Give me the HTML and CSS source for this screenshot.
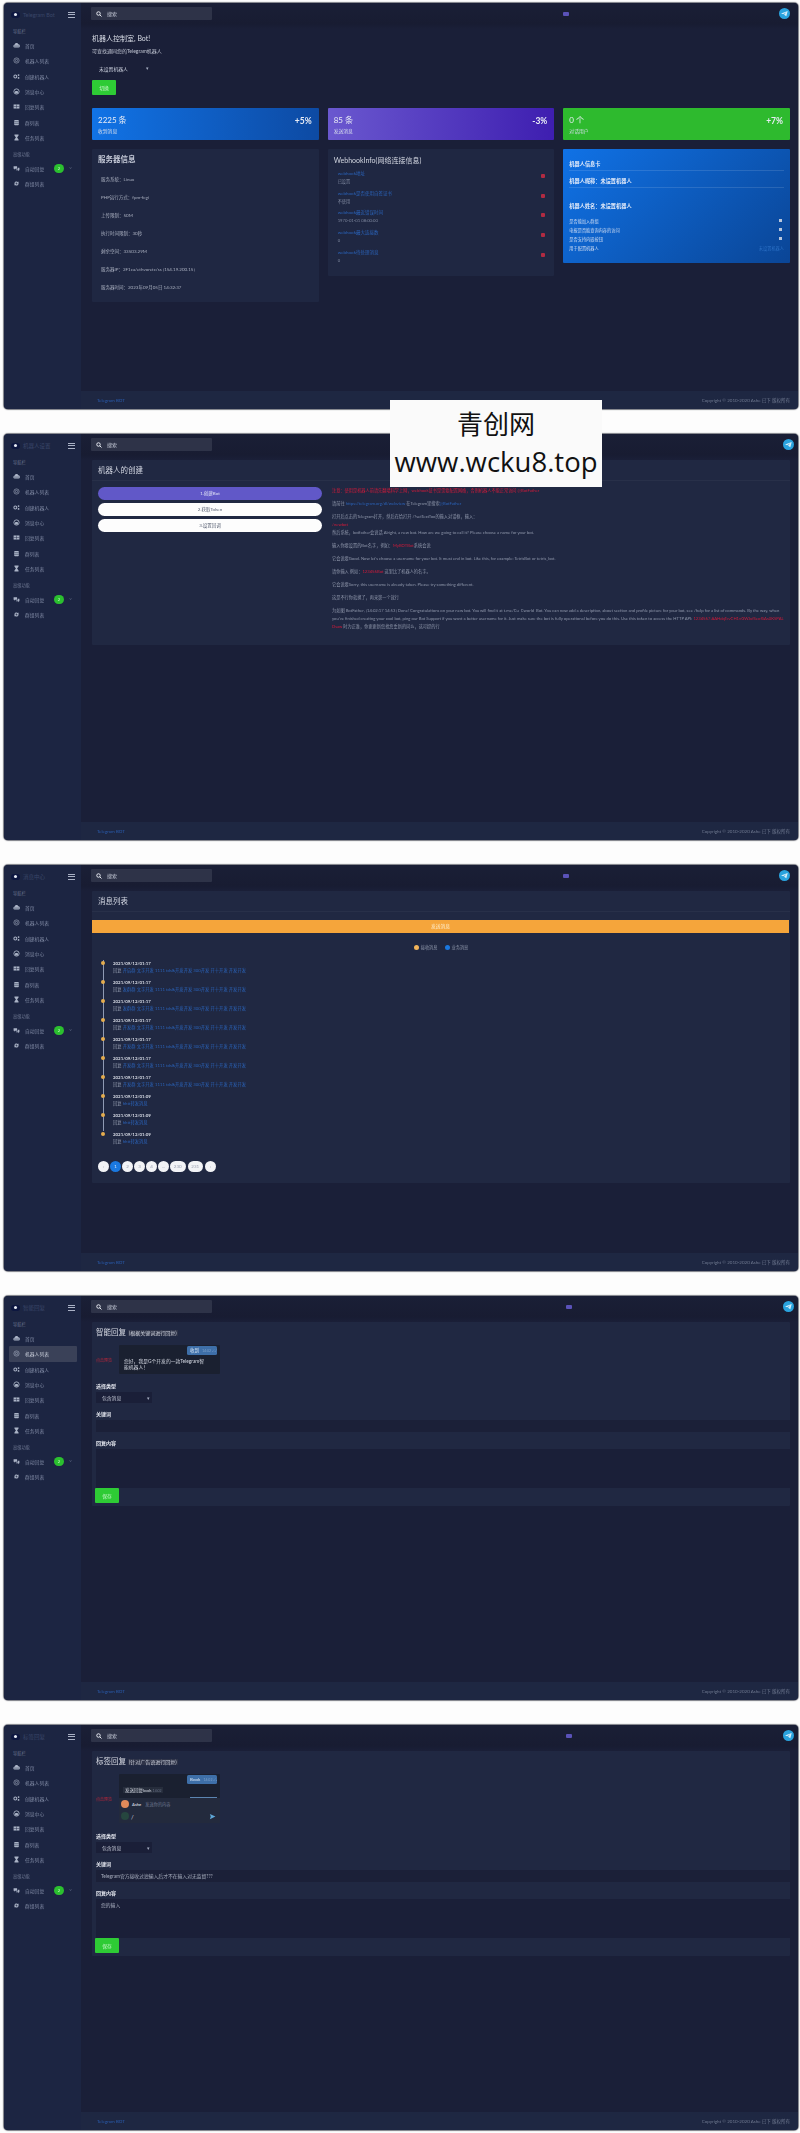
FILE: index.html
```html
<!DOCTYPE html>
<html lang="zh-CN">
<head>
<meta charset="utf-8">
<title>Telegram Bot</title>
<link rel="stylesheet" href="styles.css">
</head>
<body>
<svg class="defs" xmlns="http://www.w3.org/2000/svg">
  <symbol id="i-home" viewBox="0 0 24 24"><path d="M6 19a5 5 0 0 1-1-9.9A7 7 0 0 1 18.500 8 5.500 5.500 0 0 1 18 19z" fill="currentColor"/><path d="M3 14h18" stroke="#1c2542" stroke-width="1.500"/></symbol>
  <symbol id="i-globe" viewBox="0 0 24 24"><circle cx="12" cy="12" r="9" fill="none" stroke="currentColor" stroke-width="2"/><circle cx="12" cy="12" r="4" fill="none" stroke="currentColor" stroke-width="2"/></symbol>
  <symbol id="i-gears" viewBox="0 0 24 24"><circle cx="8" cy="12" r="5" fill="none" stroke="currentColor" stroke-width="3.500"/><circle cx="19" cy="7" r="3" fill="currentColor"/><circle cx="19" cy="17" r="3" fill="currentColor"/></symbol>
  <symbol id="i-head" viewBox="0 0 24 24"><circle cx="12" cy="12" r="9" fill="none" stroke="currentColor" stroke-width="3"/><rect x="7" y="10" width="10" height="9" rx="2" fill="currentColor"/></symbol>
  <symbol id="i-table" viewBox="0 0 24 24"><path d="M2 5h20v14H2z" fill="currentColor"/><path d="M12 5v14M2 12h20" stroke="#1c2542" stroke-width="1.500"/></symbol>
  <symbol id="i-stack" viewBox="0 0 24 24"><rect x="4" y="3" width="16" height="18" rx="3" fill="currentColor"/><path d="M4 9h16M4 15h16" stroke="#1c2542" stroke-width="1.500"/></symbol>
  <symbol id="i-glass" viewBox="0 0 24 24"><path d="M5 2h14v3l-5 7 5 7v3H5v-3l5-7-5-7z" fill="currentColor"/></symbol>
  <symbol id="i-chat" viewBox="0 0 24 24"><path d="M2 4h12v9H7l-3 3v-3H2z" fill="currentColor"/><path d="M16 9h6v9h-2v3l-3-3h-7v-3h6z" fill="currentColor"/></symbol>
  <symbol id="i-loop" viewBox="0 0 24 24"><path d="M5 12a7 7 0 0 1 12-5l2-2v7h-7l2-2a4 4 0 0 0-6 2zM19 12a7 7 0 0 1-12 5l-2 2v-7h7l-2 2a4 4 0 0 0 6-2z" fill="currentColor"/></symbol>
  <symbol id="i-search" viewBox="0 0 24 24"><circle cx="10" cy="10" r="7" fill="none" stroke="currentColor" stroke-width="4"/><path d="M15 15l7 7" stroke="currentColor" stroke-width="4"/></symbol>
  <symbol id="i-tg" viewBox="0 0 24 24"><circle cx="12" cy="12" r="12" fill="#2aa3de"/><path d="M19 6.500 4.500 12l4.500 1.500L16 9l-5 5.500 5 3.500z" fill="#d8eefa"/></symbol>
  <symbol id="i-send" viewBox="0 0 24 24"><path d="M3 3l19 9-19 9 3-9z" fill="currentColor"/></symbol>
</svg>

<section class="window">
  <aside class="sidebar">
    <div class="brand"><span class="logo"><span class="logo-dot"></span></span><span class="brand-name">Telegram Bot</span><span class="burger"><i></i><i></i><i></i></span></div>
    <div class="nav-section">导航栏</div>
    <a class="nav-item"><svg class="nav-icon"><use href="#i-home"/></svg>首页</a>
    <a class="nav-item"><svg class="nav-icon"><use href="#i-globe"/></svg>机器人列表</a>
    <a class="nav-item"><svg class="nav-icon"><use href="#i-gears"/></svg>创建机器人</a>
    <a class="nav-item"><svg class="nav-icon"><use href="#i-head"/></svg>消息中心</a>
    <a class="nav-item"><svg class="nav-icon"><use href="#i-table"/></svg>回复列表</a>
    <a class="nav-item"><svg class="nav-icon"><use href="#i-stack"/></svg>群列表</a>
    <a class="nav-item"><svg class="nav-icon"><use href="#i-glass"/></svg>任务列表</a>
    <div class="nav-section second">高级功能</div>
    <a class="nav-item"><svg class="nav-icon"><use href="#i-chat"/></svg>自动回复<span class="nav-badge">2</span><span class="nav-chev">›</span></a>
    <a class="nav-item"><svg class="nav-icon"><use href="#i-loop"/></svg>群组列表</a>
  </aside>
  <div class="main">
    <header class="topbar">
      <div class="search"><svg class="search-icon"><use href="#i-search"/></svg>搜索</div>
      <span class="pill"></span>
      <svg class="tg"><use href="#i-tg"/></svg>
    </header>
    <div class="content">
      <h1 class="hero-title">机器人控制室, Bot!</h1>
      <p class="hero-sub">可查找通同您的Telegram机器人</p>
      <div class="hero-select">未设置机器人<span class="caret">▾</span></div>
      <a class="btn hero-btn">切换</a>
      <div class="stats">
        <div class="stat stat-blue"><div><div class="stat-num">2225 条</div><div class="stat-label">收到消息</div></div><div class="stat-pct">+5%</div></div>
        <div class="stat stat-purple"><div><div class="stat-num">85 条</div><div class="stat-label">发送消息</div></div><div class="stat-pct">-3%</div></div>
        <div class="stat stat-green"><div><div class="stat-num">0 个</div><div class="stat-label">对话用户</div></div><div class="stat-pct">+7%</div></div>
      </div>
      <div class="cards">
        <div class="card server">
          <h2 class="server-title">服务器信息</h2>
          <p class="server-row">服务系统：Linux</p>
          <p class="server-row">PHP运行方式：fpm-fcgi</p>
          <p class="server-row">上传限制：50M</p>
          <p class="server-row">执行时间限制：30秒</p>
          <p class="server-row">剩余空间：33503.29M</p>
          <p class="server-row">服务器IP：2F1ca/ethvoretc/ss [154.19.200.15]</p>
          <p class="server-row">服务器时间：2023年09月05日 14:32:37</p>
        </div>
        <div class="card hook">
          <h2 class="hook-title">WebhookInfo(网络连接信息)</h2>
          <div class="hook-row"><div><a class="hook-link">webhook地址</a><div class="hook-val">已设置</div></div><span class="hook-x"></span></div>
          <div class="hook-row"><div><a class="hook-link">webhook是否使用自签证书</a><div class="hook-val">不使用</div></div><span class="hook-x"></span></div>
          <div class="hook-row"><div><a class="hook-link">webhook最近错误时间</a><div class="hook-val">1970-01-01 08:00:00</div></div><span class="hook-x"></span></div>
          <div class="hook-row"><div><a class="hook-link">webhook最大连接数</a><div class="hook-val">0</div></div><span class="hook-x"></span></div>
          <div class="hook-row"><div><a class="hook-link">webhook待处理消息</a><div class="hook-val">0</div></div><span class="hook-x"></span></div>
        </div>
        <div class="card info">
          <div class="info-head">机器人信息卡</div>
          <div class="info-head ruled">机器人昵称：未设置机器人</div>
          <div class="info-head spaced">机器人姓名：未设置机器人</div>
          <div class="info-row">是否能加入群组<span class="info-check"></span></div>
          <div class="info-row">电报是否能查询内容的访问<span class="info-check"></span></div>
          <div class="info-row">是否支持内嵌按钮<span class="info-check"></span></div>
          <div class="info-row">用于配置机器人<span class="info-dim">未设置机器人</span></div>
        </div>
      </div>
    </div>
    <footer class="footer"><a class="foot-link">Telegram BOT</a><span class="foot-copy">Copyright © 2010-2020 Ashe 已下 版权所有</span></footer>
  </div>
</section>

<section class="window">
  <aside class="sidebar">
    <div class="brand"><span class="logo"><span class="logo-dot"></span></span><span class="brand-name">机器人设置</span><span class="burger"><i></i><i></i><i></i></span></div>
    <div class="nav-section">导航栏</div>
    <a class="nav-item"><svg class="nav-icon"><use href="#i-home"/></svg>首页</a>
    <a class="nav-item"><svg class="nav-icon"><use href="#i-globe"/></svg>机器人列表</a>
    <a class="nav-item"><svg class="nav-icon"><use href="#i-gears"/></svg>创建机器人</a>
    <a class="nav-item"><svg class="nav-icon"><use href="#i-head"/></svg>消息中心</a>
    <a class="nav-item"><svg class="nav-icon"><use href="#i-table"/></svg>回复列表</a>
    <a class="nav-item"><svg class="nav-icon"><use href="#i-stack"/></svg>群列表</a>
    <a class="nav-item"><svg class="nav-icon"><use href="#i-glass"/></svg>任务列表</a>
    <div class="nav-section second">高级功能</div>
    <a class="nav-item"><svg class="nav-icon"><use href="#i-chat"/></svg>自动回复<span class="nav-badge">2</span><span class="nav-chev">›</span></a>
    <a class="nav-item"><svg class="nav-icon"><use href="#i-loop"/></svg>群组列表</a>
  </aside>
  <div class="main">
    <header class="topbar">
      <div class="search"><svg class="search-icon"><use href="#i-search"/></svg>搜索</div>
      <span class="pill pill-wide"></span>
      <svg class="tg tg-wide"><use href="#i-tg"/></svg>
    </header>
    <div class="content">
      <div class="panel create">
        <h2 class="panel-title">机器人的创建</h2>
        <div class="create-body">
          <div class="steps">
            <a class="step step-on">1.创建Bot</a>
            <a class="step">2.获取Token</a>
            <a class="step">3.设置回调</a>
          </div>
          <div class="guide">
            <p class="red">注意：使用是机器人前请先翻墙科学上网，webhook证书是需要配置网络，否则机器人不能正常访问 @BotFather</p>
            <p>请前往 <a class="link">https://telegram.org/dl/webview</a> 在Telegram里搜索<a class="link">@BotFather</a></p>
            <p>打开后点击的Telegram打开，然后在给打开 /?setTextToo的输入对话框，输入：<br><span class="red">/newbot</span><br>然后系统，botfather会说话 Alright, a new bot. How are we going to call it? Please choose a name for your bot.</p>
            <p>输入你要设置的Bot名字，例如：<span class="red">MyBOTBot</span>系统会说</p>
            <p>它会说要Good. Now let's choose a username for your bot. It must end in bot. Like this, for example: TetrisBot or tetris_bot.</p>
            <p>请你输入 例如：<span class="red">123456Bot</span> 这里比了机器人的名字。</p>
            <p>它会说要Sorry, this username is already taken. Please try something different.</p>
            <p>这是不行你就换了，再来第一个就行</p>
            <p>为如图 BotFather, [14:02:17 14:53] Done! Congratulations on your new bot. You will find it at t.me/Cu_Cworld_Bot. You can now add a description, about section and profile picture for your bot, see /help for a list of commands. By the way, when you've finished creating your cool bot, ping our Bot Support if you want a better username for it. Just make sure the bot is fully operational before you do this. Use this token to access the HTTP API: <span class="red token">1234567:AAHdqTcvCH1vGWJxfSeofSAs0K5PALDsaw</span> 时为正准，你更更新您找您重新的问么，这可提的行</p>
          </div>
        </div>
      </div>
    </div>
    <footer class="footer"><a class="foot-link">Telegram BOT</a><span class="foot-copy">Copyright © 2010-2020 Ashe 已下 版权所有</span></footer>
  </div>
</section>

<section class="window">
  <aside class="sidebar">
    <div class="brand"><span class="logo"><span class="logo-dot"></span></span><span class="brand-name">消息中心</span><span class="burger"><i></i><i></i><i></i></span></div>
    <div class="nav-section">导航栏</div>
    <a class="nav-item"><svg class="nav-icon"><use href="#i-home"/></svg>首页</a>
    <a class="nav-item"><svg class="nav-icon"><use href="#i-globe"/></svg>机器人列表</a>
    <a class="nav-item"><svg class="nav-icon"><use href="#i-gears"/></svg>创建机器人</a>
    <a class="nav-item"><svg class="nav-icon"><use href="#i-head"/></svg>消息中心</a>
    <a class="nav-item"><svg class="nav-icon"><use href="#i-table"/></svg>回复列表</a>
    <a class="nav-item"><svg class="nav-icon"><use href="#i-stack"/></svg>群列表</a>
    <a class="nav-item"><svg class="nav-icon"><use href="#i-glass"/></svg>任务列表</a>
    <div class="nav-section second">高级功能</div>
    <a class="nav-item"><svg class="nav-icon"><use href="#i-chat"/></svg>自动回复<span class="nav-badge">2</span><span class="nav-chev">›</span></a>
    <a class="nav-item"><svg class="nav-icon"><use href="#i-loop"/></svg>群组列表</a>
  </aside>
  <div class="main">
    <header class="topbar">
      <div class="search"><svg class="search-icon"><use href="#i-search"/></svg>搜索</div>
      <span class="pill"></span>
      <svg class="tg"><use href="#i-tg"/></svg>
    </header>
    <div class="content">
      <div class="panel messages">
        <h2 class="panel-title">消息列表</h2>
        <div class="banner">发送消息</div>
        <div class="legend"><span class="dot dot-orange"></span>接收消息<span class="dot dot-blue"></span>业务消息</div>
        <ul class="timeline">
          <li class="tl-item"><div class="tl-date">2021/09/12/01:17</div><div class="tl-text">回复 <a class="link">开启群 文字开发 1111 tdslk开发开发 300开发 开十开发 开发开发</a></div></li>
          <li class="tl-item"><div class="tl-date">2021/09/12/01:17</div><div class="tl-text">回复 <a class="link">发群群 文字开发 1111 tdslk开发开发 300开发 开十开发 开发开发</a></div></li>
          <li class="tl-item"><div class="tl-date">2021/09/12/01:17</div><div class="tl-text">回复 <a class="link">发群群 文字开发 1111 tdslk开发开发 300开发 开十开发 开发开发</a></div></li>
          <li class="tl-item"><div class="tl-date">2021/09/12/01:17</div><div class="tl-text">回复 <a class="link">开发群 文字开发 1111 tdslk开发开发 300开发 开十开发 开发开发</a></div></li>
          <li class="tl-item"><div class="tl-date">2021/09/12/01:17</div><div class="tl-text">回复 <a class="link">开发群 文字开发 1111 tdslk开发开发 300开发 开十开发 开发开发</a></div></li>
          <li class="tl-item"><div class="tl-date">2021/09/12/01:17</div><div class="tl-text">回复 <a class="link">开发群 文字开发 1111 tdslk开发开发 300开发 开十开发 开发开发</a></div></li>
          <li class="tl-item"><div class="tl-date">2021/09/12/01:17</div><div class="tl-text">回复 <a class="link">开发群 文字开发 1111 tdslk开发开发 300开发 开十开发 开发开发</a></div></li>
          <li class="tl-item"><div class="tl-date">2021/09/12/01:09</div><div class="tl-text">回复 <a class="link">hhtt转发消息</a></div></li>
          <li class="tl-item"><div class="tl-date">2021/09/12/01:09</div><div class="tl-text">回复 <a class="link">hhtt转发消息</a></div></li>
          <li class="tl-item"><div class="tl-date">2021/09/12/01:09</div><div class="tl-text">回复 <a class="link">hhtt转发消息</a></div></li>
        </ul>
        <nav class="pager">
          <a class="page">‹</a><a class="page page-on">1</a><a class="page">2</a><a class="page">3</a><a class="page">4</a><a class="page">…</a><a class="page page-long">230</a><a class="page page-long">231</a><a class="page">›</a>
        </nav>
      </div>
    </div>
    <footer class="footer"><a class="foot-link">Telegram BOT</a><span class="foot-copy">Copyright © 2010-2020 Ashe 已下 版权所有</span></footer>
  </div>
</section>

<section class="window">
  <aside class="sidebar">
    <div class="brand"><span class="logo"><span class="logo-dot"></span></span><span class="brand-name">智能回复</span><span class="burger"><i></i><i></i><i></i></span></div>
    <div class="nav-section">导航栏</div>
    <a class="nav-item"><svg class="nav-icon"><use href="#i-home"/></svg>首页</a>
    <a class="nav-item nav-active"><svg class="nav-icon"><use href="#i-globe"/></svg>机器人列表</a>
    <a class="nav-item"><svg class="nav-icon"><use href="#i-gears"/></svg>创建机器人</a>
    <a class="nav-item"><svg class="nav-icon"><use href="#i-head"/></svg>消息中心</a>
    <a class="nav-item"><svg class="nav-icon"><use href="#i-table"/></svg>回复列表</a>
    <a class="nav-item"><svg class="nav-icon"><use href="#i-stack"/></svg>群列表</a>
    <a class="nav-item"><svg class="nav-icon"><use href="#i-glass"/></svg>任务列表</a>
    <div class="nav-section second">高级功能</div>
    <a class="nav-item"><svg class="nav-icon"><use href="#i-chat"/></svg>自动回复<span class="nav-badge">2</span><span class="nav-chev">›</span></a>
    <a class="nav-item"><svg class="nav-icon"><use href="#i-loop"/></svg>群组列表</a>
  </aside>
  <div class="main">
    <header class="topbar">
      <div class="search"><svg class="search-icon"><use href="#i-search"/></svg>搜索</div>
      <span class="pill pill-wide"></span>
      <svg class="tg tg-wide"><use href="#i-tg"/></svg>
    </header>
    <div class="content">
      <div class="panel reply">
        <h2 class="reply-title">智能回复 <small class="reply-sub">(根据关键词进行回复)</small></h2>
        <div class="preview-row">
          <span class="preview-mark">点击预览</span>
          <div class="shot">
            <div class="shot-top"><span class="shot-btn">收到 <em>14:02 ✓✓</em></span></div>
            <div class="shot-msg">您好，我是G个开发的一款Telegram智能机器人！</div>
          </div>
        </div>
        <label class="field-label">选择类型</label>
        <div class="select-box">包含消息<span class="caret">▾</span></div>
        <label class="field-label">关键词</label>
        <div class="input-box"></div>
        <label class="field-label">回复内容</label>
        <div class="text-box"></div>
        <a class="btn save-btn">保存</a>
      </div>
    </div>
    <footer class="footer"><a class="foot-link">Telegram BOT</a><span class="foot-copy">Copyright © 2010-2020 Ashe 已下 版权所有</span></footer>
  </div>
</section>

<section class="window">
  <aside class="sidebar">
    <div class="brand"><span class="logo"><span class="logo-dot"></span></span><span class="brand-name">标签回复</span><span class="burger"><i></i><i></i><i></i></span></div>
    <div class="nav-section">导航栏</div>
    <a class="nav-item"><svg class="nav-icon"><use href="#i-home"/></svg>首页</a>
    <a class="nav-item"><svg class="nav-icon"><use href="#i-globe"/></svg>机器人列表</a>
    <a class="nav-item"><svg class="nav-icon"><use href="#i-gears"/></svg>创建机器人</a>
    <a class="nav-item"><svg class="nav-icon"><use href="#i-head"/></svg>消息中心</a>
    <a class="nav-item"><svg class="nav-icon"><use href="#i-table"/></svg>回复列表</a>
    <a class="nav-item"><svg class="nav-icon"><use href="#i-stack"/></svg>群列表</a>
    <a class="nav-item"><svg class="nav-icon"><use href="#i-glass"/></svg>任务列表</a>
    <div class="nav-section second">高级功能</div>
    <a class="nav-item"><svg class="nav-icon"><use href="#i-chat"/></svg>自动回复<span class="nav-badge">2</span><span class="nav-chev">›</span></a>
    <a class="nav-item"><svg class="nav-icon"><use href="#i-loop"/></svg>群组列表</a>
  </aside>
  <div class="main">
    <header class="topbar">
      <div class="search"><svg class="search-icon"><use href="#i-search"/></svg>搜索</div>
      <span class="pill pill-wide"></span>
      <svg class="tg tg-wide"><use href="#i-tg"/></svg>
    </header>
    <div class="content">
      <div class="panel reply">
        <h2 class="reply-title">标签回复 <small class="reply-sub">(针对广告语进行回复)</small></h2>
        <div class="preview-row">
          <span class="preview-mark">点击预览</span>
          <div class="shot shot-tall">
            <div class="shot-top"><span class="shot-btn">Book <em>14:02 ✓✓</em></span></div>
            <div class="shot-bubble">发送回复look <em>14:02</em></div>
            <div class="shot-bar"></div>
            <div class="shot-foot">
              <div class="shot-user"><span class="shot-avatar"></span><b>Ashe</b><em>发送你的内容</em></div>
              <div class="shot-input"><span class="shot-ava2"></span><span class="shot-slash">/</span><svg class="shot-send"><use href="#i-send"/></svg></div>
            </div>
          </div>
        </div>
        <label class="field-label">选择类型</label>
        <div class="select-box">包含消息<span class="caret">▾</span></div>
        <label class="field-label">关键词</label>
        <div class="input-box">Telegram官方接收过滤输入后才不在输入对无监督???</div>
        <label class="field-label">回复内容</label>
        <div class="text-box">您的输入</div>
        <a class="btn save-btn">保存</a>
      </div>
    </div>
    <footer class="footer"><a class="foot-link">Telegram BOT</a><span class="foot-copy">Copyright © 2010-2020 Ashe 已下 版权所有</span></footer>
  </div>
</section>

<aside class="watermark"><div class="wm-cn">青创网</div><div class="wm-url">www.wcku8.top</div></aside>
</body>
</html>
```

FILE: styles.css
```css
* { box-sizing: border-box; }
html, body { margin: 0; padding: 0; }
body {
  position: relative;
  width: 800px;
  height: 2133px;
  background: #fdfdfd;
  padding: 3px 2px 0 4px;
  display: grid;
  grid-template-rows: 406px 406px 406px 404px 405px;
  row-gap: 25px;
  font-family: "Lato", "Noto Sans CJK SC", sans-serif;
  color: #c9cedb;
  overflow: hidden;
}
.defs { display: none; }
h1, h2, p, ul { margin: 0; padding: 0; }
ul { list-style: none; }
em { font-style: normal; }

.window {
  display: grid;
  grid-template-columns: 77px 1fr;
  border-radius: 4px;
  overflow: hidden;
  background: #1a1f38;
  box-shadow: 0 0 1px 1px rgba(15, 18, 32, .55);
  filter: blur(.35px);
}

/* sidebar */
.sidebar { background: #1c2542; display: flex; flex-direction: column; }
.brand { height: 23px; display: flex; align-items: center; padding: 0 4px 0 7px; flex: none; }
.logo { width: 9px; height: 6px; border-radius: 3px; background: #0d1740; display: flex; align-items: center; justify-content: center; flex: none; }
.logo-dot { width: 3px; height: 3px; border-radius: 50%; background: #e8ecf5; }
.brand-name { margin-left: 3px; font-size: 5.500px; color: #3a4668; flex: 1; white-space: nowrap; }
.burger { width: 7px; display: flex; flex-direction: column; gap: 1.500px; flex: none; margin-right: 2px; }
.burger i { display: block; height: 1px; background: #aab2c6; }
.nav-section { height: 12px; line-height: 12px; padding-left: 9px; font-size: 4.200px; color: #6c7690; flex: none; }
.nav-section.second { margin-top: 3.300px; }
.nav-item {
  height: 15.330px;
  display: flex;
  align-items: center;
  margin: 0 4px 0 5px;
  padding-left: 4px;
  border-radius: 1px;
  font-size: 4.800px;
  color: #7f89a3;
  white-space: nowrap;
  flex: none;
}
.nav-active { background: #3a4158; color: #c4c9d6; }
.nav-icon { width: 7px; height: 7px; color: #aab3c6; margin-right: 5px; flex: none; }
.nav-badge {
  width: 9.500px;
  height: 9.500px;
  margin-left: auto;
  border-radius: 50%;
  background: #2bc02f;
  color: #d8f5d8;
  font-size: 4px;
  line-height: 9.500px;
  text-align: center;
  flex: none;
}
.nav-chev { margin: 0 6px 0 6px; font-size: 5px; color: #7f89a3; transform: rotate(90deg); }

/* top bar */
.main { display: flex; flex-direction: column; min-width: 0; }
.topbar { height: 26px; flex: none; display: flex; align-items: flex-start; padding: 4px 8px 0 10px; background: linear-gradient(#1a1f36, #181c32 80%, #1a1f38); }
.search { width: 121px; height: 13px; display: flex; align-items: center; padding-left: 5px; background: #2e3348; border-radius: 1px; font-size: 5px; color: #c9cedb; }
.search-icon { width: 6px; height: 6px; margin-right: 5px; color: #e3e6ee; }
.pill { width: 6.500px; height: 4px; margin: 4.500px 210px 0 auto; border-radius: 1px; background: #5a52b8; flex: none; }
.tg { width: 11px; height: 11px; margin-top: 1px; flex: none; }
.pill-wide { margin-right: 210px; transform: translateX(3px); }
.tg-wide { transform: translateX(4px); }

.content { flex: 1; min-height: 0; padding: 0 8px 0 11px; }

.footer { height: 18px; flex: none; display: flex; align-items: center; justify-content: space-between; padding: 0 8px 0 16px; background: #1e2742; font-size: 4.500px; }
.foot-link { color: #2a5db0; }
.foot-copy { color: #6f7990; }

/* dashboard */
.hero-title { padding-top: 4px; height: 14px; line-height: 10px; font-size: 7px; font-weight: 400; color: #d7dbe5; }
.hero-sub { margin-top: 4px; height: 8px; line-height: 8px; font-size: 5px; color: #c0c5d2; }
.hero-select { margin-top: 7px; width: 64px; height: 12px; padding-left: 7px; display: flex; align-items: center; justify-content: space-between; padding-right: 7px; font-size: 4.800px; color: #c9cedb; }
.caret { font-size: 5px; color: #a5adbf; }
.btn { display: flex; align-items: center; justify-content: center; width: 24px; height: 15px; background: #2ecb35; color: #c8f5ca; font-size: 4.800px; border-radius: 1px; }
.hero-btn { margin-top: 6px; }

.stats { margin-top: 13px; display: grid; grid-template-columns: repeat(3, 1fr); column-gap: 9px; }
.stat { height: 32px; padding: 7px 7px 0 6px; display: flex; justify-content: space-between; border-radius: 1px; color: #e8ecf5; }
.stat-blue { background: linear-gradient(90deg, #1173e6, #0d4aa3); }
.stat-purple { background: linear-gradient(90deg, #6a58cf, #3e1eb0); }
.stat-green { background: #2eba2e; }
.stat-num { font-size: 8px; line-height: 10px; }
.stat-label { margin-top: 3px; font-size: 4.800px; line-height: 7px; color: #d6dded; }
.stat-pct { font-size: 8.500px; font-weight: 700; line-height: 11px; margin-top: 1px; }

.cards { margin-top: 9px; display: grid; grid-template-columns: repeat(3, 1fr); column-gap: 9px; align-items: start; }
.card { background: #1f2742; border-radius: 1px; }
.server { height: 153px; padding: 6px 6px 0; }
.server-title { font-size: 7.500px; line-height: 9px; font-weight: 700; color: #c3c8d6; margin-bottom: 7px; }
.server-row { height: 18px; line-height: 18px; padding-left: 3px; font-size: 4.500px; color: #a9afbf; }
.hook { height: 127px; padding: 6px 9px 0 6px; }
.hook-title { font-size: 7px; line-height: 10px; font-weight: 400; color: #d2d6e0; margin-bottom: 3px; }
.hook-row { height: 19.700px; padding: 0 0 0 4px; display: flex; justify-content: space-between; align-items: center; }
.hook-link { display: block; font-size: 4.500px; line-height: 8px; color: #2a62b8; }
.hook-val { font-size: 4.200px; line-height: 8px; color: #7f889f; }
.hook-x { width: 4px; height: 4px; background: #b02b42; border-radius: 1px; margin-top: -4px; }
.info { height: 114px; padding: 11px 6px 0; background: linear-gradient(135deg, #1072e6, #0a4596); color: #e8eefa; }
.info-head { font-size: 5.200px; font-weight: 700; line-height: 8px; padding-bottom: 2px; border-bottom: 1px solid rgba(255, 255, 255, .12); margin-bottom: 6px; }
.info-head.spaced { border-bottom: 0; margin-top: 14px; margin-bottom: 4px; }
.info-row { height: 9px; display: flex; justify-content: space-between; align-items: center; font-size: 4.200px; color: #cfdcf2; }
.info-check { width: 3.500px; height: 3.500px; background: #b8c6dc; margin-right: 2px; }
.info-dim { color: #2a6fc4; }

/* panels */
.panel { background: #202842; border-radius: 1px; }
.panel-title { height: 21px; line-height: 22px; padding-left: 6px; font-size: 7.500px; font-weight: 400; color: #d3d7e2; border-bottom: 1px solid rgba(255, 255, 255, .04); }

/* create */
.create { height: 185px; }
.create-body { display: grid; grid-template-columns: 224px 1fr; column-gap: 10px; padding: 6px 5px 0 6px; }
.steps { display: flex; flex-direction: column; gap: 3px; }
.step { height: 13px; line-height: 13px; border-radius: 7px; background: #fdfdfd; color: #555d70; font-size: 4.500px; text-align: center; }
.step-on { background: #6158c8; color: #dfe1f5; }
.guide p { font-size: 4.200px; line-height: 8px; margin-bottom: 5px; color: #8f97ab; }
.guide .red { color: #d11a3a; }
.guide .token { word-break: break-all; }
.link { color: #2a62b8; }

/* messages */
.messages { height: 292px; }
.banner { margin: 8px 1px 0 0; height: 13px; line-height: 13px; background: #f5a53b; color: #fdebc8; font-size: 4.800px; text-align: center; }
.legend { margin-top: 8px; height: 12px; display: flex; align-items: center; justify-content: center; gap: 2px; font-size: 4.200px; color: #8f97ab; }
.dot { width: 5px; height: 5px; border-radius: 50%; }
.dot-orange { background: #f2b45a; }
.dot-blue { background: #1a78e0; margin-left: 5px; }
.timeline { margin: 0 0 0 8px; padding-top: 7px; }
.tl-item { position: relative; height: 19px; padding-left: 9px; border-left: 1px solid #8f9ab3; margin-left: 3px; }
.tl-item:last-child { border-left-color: transparent; }
.tl-item::before { content: ""; position: absolute; left: -3px; top: 1px; width: 4px; height: 4px; border-radius: 50%; background: #e5ad4e; }
.tl-date { font-size: 4.400px; line-height: 7px; color: #d5d9e3; font-weight: 700; }
.tl-text { font-size: 4.300px; line-height: 7.500px; color: #8f97ab; white-space: nowrap; }
.pager { margin: 10.500px 0 0 6px; display: flex; gap: 0; align-items: center; }
.page { width: 11px; height: 11px; line-height: 11px; margin-right: 1px; border-radius: 6px; background: #f2f3f6; color: #9aa1b2; font-size: 4.500px; text-align: center; }
.page-long { width: 15.500px; margin-right: 2px; }
.page-on { background: #1a78e0; color: #d6e6fb; }

/* forms */
.reply { padding: 6px 0 3px 4px; }
.reply-title { height: 10px; line-height: 10px; font-size: 7.500px; font-weight: 400; color: #d8dbe4; white-space: nowrap; }
.reply-sub { font-size: 5px; color: #d0d4df; background: #2e3348; padding: 0 1px; }
.preview-row { margin-top: 7px; display: flex; align-items: center; }
.preview-mark { width: 23px; flex: none; font-size: 4px; color: #c0263a; }
.shot { width: 101px; height: 29px; background: #1a2030; border-radius: 1px; }
.shot-top { height: 11px; padding: 1px 3px 0 0; display: flex; justify-content: flex-end; }
.shot-btn { width: 30px; height: 9px; padding-left: 3px; line-height: 9px; background: #3e6fa8; border-radius: 1.500px; font-size: 4.500px; color: #d9e6f5; white-space: nowrap; overflow: hidden; }
.shot-btn em { font-size: 3.500px; color: #7fa2cb; margin-left: 2px; }
.shot-msg { margin: 2px 14px 0 5px; font-size: 4.800px; line-height: 6px; color: #d5d9e3; }
.shot-tall { height: 49px; margin-bottom: 1px; display: flex; flex-direction: column; }
.shot-bubble { margin: 3px 0 0 4px; width: 40px; height: 8px; line-height: 8px; padding-left: 2px; background: #262d3c; font-size: 4.500px; color: #d5d9e3; white-space: nowrap; overflow: hidden; }
.shot-bubble em { font-size: 3.500px; color: #697287; }
.shot-bar { margin: 4px 3px 0 auto; width: 27px; height: 1px; background: #5b84b0; }
.shot-foot { flex: 1; background: #232a3d; padding: 1px 3px 0 2px; }
.shot-user { height: 10px; display: flex; align-items: center; font-size: 4.200px; color: #6d7690; }
.shot-user b { color: #c3c8d6; margin: 0 4px 0 3px; font-weight: 700; }
.shot-avatar { width: 8px; height: 8px; border-radius: 50%; background: #e08a5a; }
.shot-input { height: 14px; display: flex; align-items: center; }
.shot-ava2 { width: 8px; height: 8px; border-radius: 50%; background: #26463f; }
.shot-slash { margin-left: 2px; font-size: 6px; color: #d5d9e3; }
.shot-send { width: 7px; height: 7px; margin-left: auto; margin-right: 1px; color: #5fa8d8; }
.field-label { display: block; margin-top: 8px; height: 8px; line-height: 8px; font-size: 5px; font-weight: 700; color: #e3e6ee; }
.select-box { margin-top: 2px; width: 56px; height: 11px; display: flex; align-items: center; justify-content: space-between; padding: 0 2px 0 6px; background: #1a1f38; font-size: 4.800px; color: #c0c5d2; }
.select-box + .field-label, .input-box + .field-label { margin-top: 7px; }
.input-box { margin-top: 2px; height: 12px; line-height: 12px; padding-left: 5px; background: #1b2038; font-size: 4.800px; color: #a9afbf; }
.text-box { margin-top: 2px; height: 38.500px; padding: 3px 5px; background: #1a1f38; font-size: 4.800px; line-height: 7px; color: #a9afbf; }
.save-btn { margin-left: -1px; }

/* watermark over the screenshots */
.watermark {
  position: absolute;
  left: 390px;
  top: 400px;
  width: 212px;
  height: 87px;
  background: #fafafa;
  color: #111;
  text-align: center;
  font-family: "Open Sans", "Noto Sans CJK SC", sans-serif;
}
.wm-cn { font-size: 26px; line-height: 46px; font-family: "Noto Sans CJK SC", sans-serif; }
.wm-url { font-size: 27.500px; line-height: 32px; white-space: nowrap; }
```
